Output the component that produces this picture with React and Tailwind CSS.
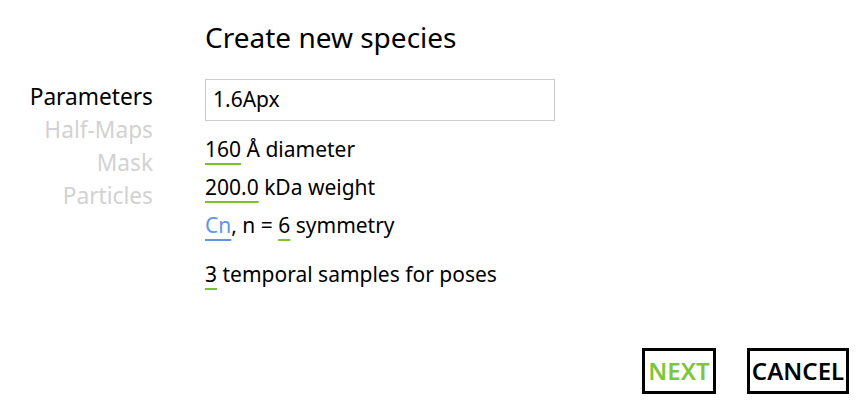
const font = { fontFamily: '"Noto Sans", "Open Sans", sans-serif' };

const Val = ({ children, blue }) => (
  <span
    className={`underline decoration-2 underline-offset-[6px] ${
      blue ? 'text-[#5f95e8] decoration-[#5f95e8]' : 'decoration-[#7cc12e]'
    }`}
  >
    {children}
  </span>
);

const App = () => {
  const steps = ['Parameters', 'Half-Maps', 'Mask', 'Particles'];

  return (
    <div className="h-[407px] w-[860px] bg-white text-black flex flex-col" style={font}>
      <div className="flex">
        {/* Step list */}
        <div className="w-[153px] pt-[80px] flex flex-col items-end text-[22.7px] leading-[33px]">
          {steps.map((s, i) => (
            <div key={s} className={i === 0 ? 'text-black' : 'text-[#d2d2d2]'}>
              {s}
            </div>
          ))}
        </div>

        {/* Form */}
        <div className="ml-[52px] flex flex-col">
          <h1 className="mt-[17px] text-[28px] leading-[40px]">Create new species</h1>
          <div className="mt-[22px] w-[350px] h-[42px] border border-[#cccccc] flex items-center px-[7px] text-[21px]">
            1.6Apx
          </div>
          <div className="mt-[9px] flex flex-col text-[21px] leading-[38px]">
            <div>
              <Val>160</Val> Å diameter
            </div>
            <div>
              <Val>200.0</Val> kDa weight
            </div>
            <div>
              <Val blue>Cn</Val>, n = <Val>6</Val> symmetry
            </div>
            <div className="mt-[11px]">
              <Val>3</Val> temporal samples for poses
            </div>
          </div>
        </div>
      </div>

      {/* Actions */}
      <div className="mt-auto mb-[13px] mr-[11px] flex justify-end gap-[31px]">
        <button className="h-[46px] w-[74px] border-[3px] border-black flex items-center justify-center text-[24px] font-semibold text-[#7cc63a]">
          NEXT
        </button>
        <button className="h-[46px] w-[102px] border-[3px] border-black flex items-center justify-center text-[24px] font-semibold text-black">
          CANCEL
        </button>
      </div>
    </div>
  );
};

export default App;
